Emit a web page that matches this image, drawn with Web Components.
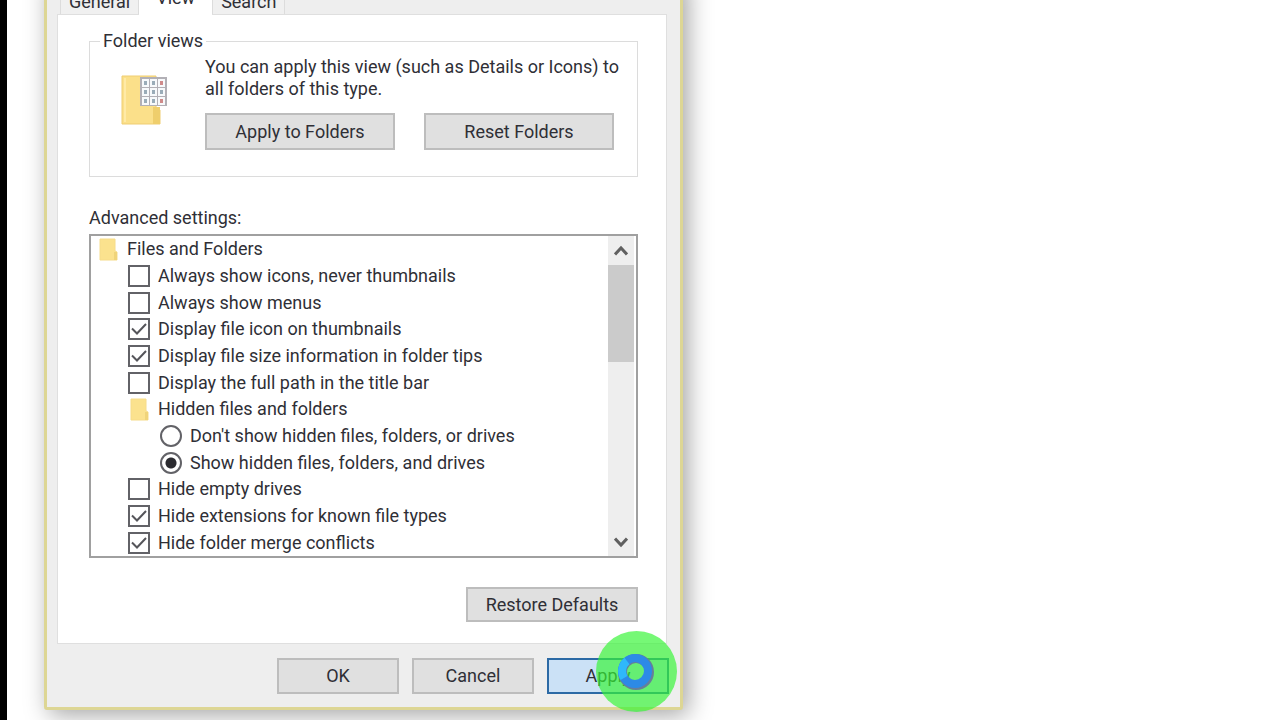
<!DOCTYPE html>
<html lang="en">
<head>
<meta charset="utf-8">
<title>Folder Options</title>
<style>
  body {
    margin: 0;
    background: #fff;
    color: #2f2f36;
    font: 18px/22px Roboto, "Liberation Sans", sans-serif;
  }
</style>
</head>
<body>

<desktop-area>
  <options-dialog>
    <tab-strip slot="tabs">
      <tab-button>General</tab-button>
      <tab-button selected>View</tab-button>
      <tab-button>Search</tab-button>
    </tab-strip>

    <folder-views></folder-views>

    <settings-list label="Advanced settings:">
      <settings-folder>Files and Folders</settings-folder>
      <settings-option level="1">Always show icons, never thumbnails</settings-option>
      <settings-option level="1">Always show menus</settings-option>
      <settings-option level="1" checked>Display file icon on thumbnails</settings-option>
      <settings-option level="1" checked>Display file size information in folder tips</settings-option>
      <settings-option level="1">Display the full path in the title bar</settings-option>
      <settings-folder level="1">Hidden files and folders</settings-folder>
      <settings-option level="2" type="radio">Don't show hidden files, folders, or drives</settings-option>
      <settings-option level="2" type="radio" checked>Show hidden files, folders, and drives</settings-option>
      <settings-option level="1">Hide empty drives</settings-option>
      <settings-option level="1" checked>Hide extensions for known file types</settings-option>
      <settings-option level="1" checked>Hide folder merge conflicts</settings-option>
    </settings-list>

    <push-button class="restore" style="--button-width: 172px; --button-height: 35px">Restore Defaults</push-button>

    <push-button slot="footer">OK</push-button>
    <push-button slot="footer">Cancel</push-button>
    <push-button slot="footer" active>Apply<busy-cursor slot="overlay"></busy-cursor></push-button>
  </options-dialog>
</desktop-area>

<script>
/** Base class: renders styles() and template() into an open shadow root. */
class BaseElement extends HTMLElement {
  constructor() {
    super();
    this.attachShadow({ mode: 'open' });
  }

  connectedCallback() {
    this.shadowRoot.innerHTML = `
      <style>
        *, *::before, *::after { box-sizing: border-box; }
        ${this.styles()}
      </style>
      ${this.template()}
    `;
    this.setup();
  }

  setup() {}
}

class DesktopArea extends BaseElement {
  styles() {
    return `
      :host {
        display: block;
        height: 100vh;
        overflow: hidden;
        box-sizing: border-box;
        border-left: 7px solid #000;
        padding-left: 37px;
      }
    `;
  }

  template() {
    return `<slot></slot>`;
  }
}

// The dialog is dragged partly above the top of the desktop
class OptionsDialog extends BaseElement {
  styles() {
    return `
      :host {
        display: block;
        box-sizing: border-box;
        max-width: 639px;
        margin-top: -24px;
        padding: 7px 13px 13px 10px;
        background: #eee;
        border: 3px solid #ddd694;
        border-radius: 3px;
        box-shadow: 5px 5px 24px rgba(0, 0, 0, 0.36);
      }
      .panel {
        display: flex;
        flex-direction: column;
        padding: 15px 28px 21px 31px;
        background: #fff;
        border: 1px solid #dfdfdf;
      }
      ::slotted(settings-list) {
        margin-top: 30px;
      }
      ::slotted(.restore) {
        align-self: flex-end;
        margin-top: 29px;
      }
      .footer {
        display: flex;
        justify-content: flex-end;
        gap: 13px;
        margin: 14px -2px 0 0;
      }
    `;
  }

  template() {
    return `
      <slot name="tabs"></slot>
      <div class="panel"><slot></slot></div>
      <div class="footer"><slot name="footer"></slot></div>
    `;
  }
}

class TabStrip extends BaseElement {
  styles() {
    return `
      :host {
        display: flex;
        align-items: flex-end;
        padding-left: 3px;
        height: 28px;
      }
    `;
  }

  template() {
    return `<slot></slot>`;
  }
}

class TabButton extends BaseElement {
  styles() {
    return `
      :host { display: block; }
      button {
        display: block;
        height: 26px;
        padding: 0 8px;
        border: 1px solid #dcdcdc;
        border-bottom: 0;
        background: #f0f0f0;
        color: inherit;
        font: inherit;
      }
      :host([selected]) {
        position: relative;
        margin-bottom: -1px;
      }
      :host([selected]) button {
        height: 32px;
        padding: 0 16px 4px;
        border-color: #fff;
        background: #fff;
      }
    `;
  }

  template() {
    return `<button type="button"><slot></slot></button>`;
  }
}

class PushButton extends BaseElement {
  styles() {
    return `
      :host {
        display: block;
        position: relative;
        width: var(--button-width, 122px);
      }
      button {
        display: block;
        width: 100%;
        height: var(--button-height, 36px);
        padding: 0;
        border: 2px solid #bdbdbd;
        background: #e0e0e0;
        color: inherit;
        font: inherit;
      }
      :host([active]) button {
        border-color: #2c6aa5;
        background: #cbe1f6;
      }
    `;
  }

  template() {
    return `
      <button type="button"><slot></slot></button>
      <slot name="overlay"></slot>
    `;
  }
}

/** Busy pointer with the green click highlight behind it. */
class BusyCursor extends BaseElement {
  styles() {
    return `
      :host {
        position: absolute;
        right: -8px;
        top: -27px;
        pointer-events: none;
      }
      svg { display: block; }
    `;
  }

  template() {
    return `
      <svg width="81" height="81" viewBox="0 0 81 81" aria-hidden="true">
        <circle cx="40.500" cy="40.500" r="40.500" fill="#35f535" fill-opacity=".68"/>
        <circle cx="40" cy="41" r="13.500" fill="none" stroke="#667f99" stroke-width="9"/>
        <circle cx="39" cy="40" r="13" fill="none" stroke="#2d8ae6" stroke-width="8"/>
        <path d="M28 47 A13 13 0 0 1 31 30" fill="none" stroke="#2fb8fa" stroke-width="8"/>
      </svg>
    `;
  }
}

class FolderViews extends BaseElement {
  styles() {
    return `
      :host { display: block; }
      fieldset {
        min-width: 0;
        margin: 0;
        padding: 4px 23px 26px 31px;
        border: 1px solid #dcdcdc;
      }
      legend {
        margin-left: -21px;
        padding: 0 3px;
      }
      .row {
        display: flex;
        gap: 37px;
      }
      .icon {
        flex: none;
        margin-top: 18px;
      }
      .content { flex: 1; }
      p {
        margin: 0 0 13px;
        white-space: nowrap;
      }
      .buttons {
        display: flex;
        gap: 29px;
        --button-width: 190px;
        --button-height: 37px;
      }
    `;
  }

  template() {
    const cells = [];
    for (let row = 0; row < 3; row++) {
      for (let col = 0; col < 3; col++) {
        const x = 21 + col * 8;
        const y = 5 + row * 9;
        const red = col === 2 && row !== 1;
        cells.push(`
          <rect x="${x}" y="${y}" width="7" height="8" fill="#f7f9fb"/>
          <rect x="${x + 2}" y="${y + 2}" width="3" height="4" fill="${red ? '#cf8a8a' : '#9aacb8'}"/>
        `);
      }
    }
    return `
      <fieldset>
        <legend>Folder views</legend>
        <div class="row">
          <svg class="icon" width="47" height="52" viewBox="0 0 47 52" aria-hidden="true">
            <path d="M1 2 h34 v31 l4 3 v14 H1z" fill="#fbe08a" stroke="#efcd72"/>
            <path d="M32 33 h7 v17 h-7z" fill="#efce6c"/>
            <path d="M4 4 v44" stroke="#ffeaa6" stroke-width="2"/>
            <rect x="19" y="3" width="27" height="29" fill="#b2b0b6"/>
            ${cells.join('')}
          </svg>
          <div class="content">
            <p>You can apply this view (such as Details or Icons) to<br>all folders of this type.</p>
            <div class="buttons">
              <push-button>Apply to Folders</push-button>
              <push-button>Reset Folders</push-button>
            </div>
          </div>
        </div>
      </fieldset>
    `;
  }
}

class SettingsList extends BaseElement {
  styles() {
    return `
      :host { display: block; }
      .box {
        display: flex;
        height: 324px;
        margin-top: 5px;
        padding-right: 2px;
        border: 2px solid #a0a0a0;
      }
      .items {
        flex: 1;
        display: grid;
        grid-auto-rows: 1fr;
        padding-left: 6px;
      }
      .scrollbar {
        display: flex;
        flex-direction: column;
        width: 26px;
        background: #eee;
      }
      .scrollbar button {
        display: flex;
        align-items: center;
        justify-content: center;
        height: 29px;
        padding: 0;
        border: 0;
        background: none;
      }
      .track { flex: 1; }
      .thumb {
        height: 97px;
        background: #cbcbcb;
      }
    `;
  }

  template() {
    return `
      <div id="label">${this.getAttribute('label')}</div>
      <div class="box">
        <div class="items" role="group" aria-labelledby="label"><slot></slot></div>
        <div class="scrollbar">
          <button type="button" aria-label="Scroll up">
            <svg width="14" height="12" viewBox="0 0 14 12"><path d="M1 9.500 L7 3 L13 9.500" fill="none" stroke="#606060" stroke-width="3"/></svg>
          </button>
          <div class="track"><div class="thumb"></div></div>
          <button type="button" aria-label="Scroll down">
            <svg width="14" height="12" viewBox="0 0 14 12"><path d="M1 2.500 L7 9 L13 2.500" fill="none" stroke="#606060" stroke-width="3"/></svg>
          </button>
        </div>
      </div>
    `;
  }

  setup() {
    // radios live in separate shadow roots, so the browser can't group them
    this.addEventListener('option-picked', (event) => {
      this.querySelectorAll('settings-option[type="radio"]').forEach((option) => {
        option.input.checked = option === event.target;
      });
    });
  }
}

const rowStyles = `
  :host {
    display: flex;
    align-items: center;
    min-height: 0;
  }
  :host([level="1"]) { padding-left: 31px; }
  :host([level="2"]) { padding-left: 63px; }
`;

class SettingsFolder extends BaseElement {
  styles() {
    return `
      ${rowStyles}
      svg {
        flex: none;
        margin: 0 9px 0 2px;
      }
    `;
  }

  template() {
    return `
      <svg width="19" height="23" viewBox="0 0 19 23" aria-hidden="true">
        <path d="M1 1 h15 v12 l2 1 v8 H1z" fill="#fbe28e" stroke="#f6dc8a"/>
        <path d="M15 14 h3 v8 h-3z" fill="#f0d47a"/>
      </svg>
      <span><slot></slot></span>
    `;
  }
}

class SettingsOption extends BaseElement {
  styles() {
    return `
      ${rowStyles}
      label {
        display: flex;
        align-items: center;
        gap: 8px;
      }
      input {
        appearance: none;
        flex: none;
        width: 22px;
        height: 22px;
        margin: 0;
        border: 2px solid #626267;
        background: #fff center / 18px 18px no-repeat;
      }
      input[type="checkbox"]:checked {
        background-image: url("data:image/svg+xml,%3Csvg xmlns='http://www.w3.org/2000/svg' viewBox='0 0 18 18'%3E%3Cpath d='M2 8.500 L7 13.500 L16 4' fill='none' stroke='%2355555a' stroke-width='2'/%3E%3C/svg%3E");
      }
      input[type="radio"] { border-radius: 50%; }
      input[type="radio"]:checked {
        background-image: radial-gradient(circle, #2b2b30 5px, transparent 6px);
      }
    `;
  }

  template() {
    const type = this.getAttribute('type') || 'checkbox';
    const checked = this.hasAttribute('checked') ? 'checked' : '';
    return `<label><input type="${type}" ${checked}><span><slot></slot></span></label>`;
  }

  setup() {
    this.input = this.shadowRoot.querySelector('input');
    if (this.input.type === 'radio') {
      this.input.addEventListener('change', () => {
        this.dispatchEvent(new CustomEvent('option-picked', { bubbles: true }));
      });
    }
  }
}

customElements.define('desktop-area', DesktopArea);
customElements.define('options-dialog', OptionsDialog);
customElements.define('tab-strip', TabStrip);
customElements.define('tab-button', TabButton);
customElements.define('push-button', PushButton);
customElements.define('busy-cursor', BusyCursor);
customElements.define('folder-views', FolderViews);
customElements.define('settings-list', SettingsList);
customElements.define('settings-folder', SettingsFolder);
customElements.define('settings-option', SettingsOption);
</script>
</body>
</html>
